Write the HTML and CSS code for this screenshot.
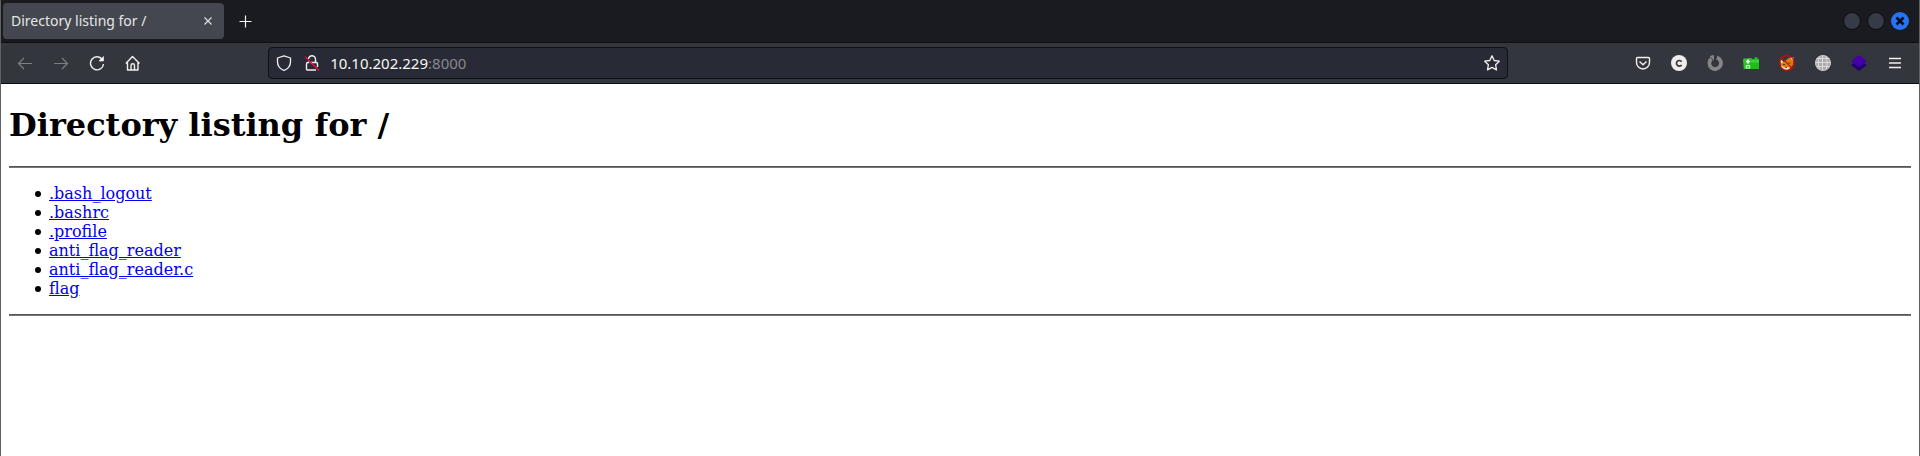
FILE: index.html
```html
<!DOCTYPE html>
<html lang="en">
<head>
<meta charset="utf-8">
<title>Directory listing for /</title>
<link rel="stylesheet" href="styles.css">
</head>
<body>
<div class="window">
  <header class="tabbar">
    <div class="tab">
      <span class="tab-title">Directory listing for /</span>
      <button class="tab-close" aria-label="Close tab"><svg width="16" height="16" viewBox="0 0 16 16"><path d="M4.500 4.500l7 7M11.500 4.500l-7 7" stroke="#e4e4e4" stroke-width="1.100"/></svg></button>
    </div>
    <button class="new-tab" aria-label="New tab"><svg width="16" height="16" viewBox="0 0 16 16"><path d="M8.500 2.500v12M2.500 8.500h12" stroke="#f4f4f4" stroke-width="1.200"/></svg></button>
    <div class="controls">
      <button class="control" aria-label="Minimize"></button>
      <button class="control" aria-label="Maximize"></button>
      <button class="control control-close" aria-label="Close"><svg width="18" height="18" viewBox="0 0 18 18"><path d="M5.500 5.500l7 7M12.500 5.500l-7 7" stroke="#090c14" stroke-width="2.600"/></svg></button>
    </div>
  </header>
  <nav class="toolbar">
    <button class="tool dim" aria-label="Back"><svg class="line" viewBox="0 0 16 16"><path d="M15 8.500H1.500M7 3L1.500 8.500L7 14"/></svg></button>
    <button class="tool dim" aria-label="Forward"><svg class="line" viewBox="0 0 16 16"><path d="M1 8.500h13.500M9 3l5.500 5.500L9 14"/></svg></button>
    <button class="tool" aria-label="Reload"><svg class="line" viewBox="0 0 16 16"><path d="M13.300 4.500A6.500 6.500 0 1 0 14.500 9" stroke-width="1.400"/><path d="M14.500 1.500v4.500h-4.500z" fill="#fbfbfe" stroke-width=".6"/></svg></button>
    <button class="tool" aria-label="Home"><svg class="line" viewBox="0 0 16 16"><path d="M.8 8.500L7.500 1.500l7 7M2.500 7.500v7.500h10.500v-7.500M6 15v-4.500a1.700 1.700 0 0 1 3.500 0v4.500" stroke-width="1.400" stroke-linejoin="round"/></svg></button>
    <div class="spring"></div>
    <div class="urlbar">
      <svg class="line" viewBox="0 0 16 16"><path d="M8 .8L14.500 3v3.500c0 4-2.500 7.500-6.500 9c-4-1.500-6.500-5-6.500-9V3z" stroke-width="1.300" stroke-linejoin="round"/></svg>
      <svg class="line lock" viewBox="0 0 16 16"><path d="M4.500 4a3.500 3.500 0 0 1 7 .5v3M6 7.500h6.500a1 1 0 0 1 1 1v3.500M12 15H3.500a1 1 0 0 1-1-1v-5a1.500 1.500 0 0 1 1.500-1.500h.500v-1" stroke-width="1.400"/><path d="M1 1.800l14 13.700" stroke="#e2123d" stroke-width="1.500"/></svg>
      <div class="url" role="textbox" aria-label="Address" tabindex="0">10.10.202.229<span class="port">:8000</span></div>
      <button class="bookmark" aria-label="Bookmark"><svg class="line" viewBox="0 0 16 16"><path d="M8 .8l2.200 4.700 5.100.7-3.700 3.500.9 5.200L8 12.400l-4.500 2.500.9-5.200L.7 6.200l5.100-.7z" stroke-width="1.300" stroke-linejoin="round"/></svg></button>
    </div>
    <div class="spring"></div>
    <button class="tool" aria-label="Pocket"><svg class="line" viewBox="0 0 16 16"><path d="M2.500 2.500h11a1 1 0 0 1 1 1v4a6.500 6.500 0 0 1-13 0v-4a1 1 0 0 1 1-1zM4.500 6.500L8 9.800l3.500-3.300" stroke-width="1.400" stroke-linejoin="round"/></svg></button>
    <button class="tool" aria-label="Cookies"><svg viewBox="0 0 16 16"><circle cx="8" cy="8" r="8" fill="#ededeb"/><path d="M10.600 6.700a2.800 2.800 0 1 0 0 3.200" fill="none" stroke="#373940" stroke-width="1.700"/></svg></button>
    <button class="tool" aria-label="Cycle"><svg viewBox="0 0 16 16"><path d="M9.800 2.600A5.800 5.800 0 1 1 4.500 3.700" fill="none" stroke="#858587" stroke-width="3.800"/><path d="M2.500 1L7 0v5.500z" fill="#858587"/></svg></button>
    <button class="tool" aria-label="Folder"><svg viewBox="0 0 16 16"><path d="M5 3h3.500l1 1H11l.7-1.700h2.600l.7 1.700h1v10H4z" fill="#24b924"/><path d="M0 4.500l1-1h5.500l1 1.500V14H.8z" fill="#2fc42c"/><path d="M7.500 5H16v2.500H7.500z" fill="#39d435"/><path d="M5 4.500v4M3 6.500h4" stroke="#fff" stroke-width="1.700"/><path d="M3.500 10.500h3v2.500h-3z" fill="none" stroke="#c8f5c5" stroke-width="1.200"/></svg></button>
    <button class="tool" aria-label="Fox"><svg viewBox="0 0 16 16"><path d="M1.500 6L5 7l4-3.500L13.500 2l1 3-.5 5-3.500 4-5 1-3.500-2.500z" fill="#dc7c0b"/><path d="M1 3.500l3.500 3.500-2.500 1.500zM11 2.500l3.500-.5v4zM2 10.500l3.500 2 3.500-.5 2 1.500-4 2-3.500-1.500z" fill="#eee3c7"/><path d="M4 9.500h2M9.500 8h2M6.500 12.500h1.500" stroke="#5a300c" stroke-width="1.100"/><circle cx="8" cy="8" r="7.400" fill="none" stroke="#c50c0c" stroke-width="1.200"/><path d="M2.700 2.700l10.600 10.600" stroke="#c50c0c" stroke-width="1.200"/></svg></button>
    <button class="tool" aria-label="Globe"><svg viewBox="0 0 16 16"><circle cx="8" cy="8" r="7.700" fill="#aaa"/><path d="M7.500 .5v15M.5 7.500h15M1.500 3.500h13M1.500 11.500h13M4.500 1c-1.500 4-1.500 10 0 14M11 1c1.500 4 1.500 10 0 14" stroke="#dcdcdc" fill="none"/><circle cx="8" cy="8" r="7.500" fill="none" stroke="#c7c7c7"/></svg></button>
    <button class="tool" aria-label="Layers"><svg viewBox="0 0 16 16"><path d="M0 10l8-5 8 5-8 6z" fill="#210070"/><path d="M0 6l8-6 8 6-8 6z" fill="#4600aa"/></svg></button>
    <button class="tool" aria-label="Menu"><svg class="line" viewBox="0 0 16 16"><path d="M2 3.500h12M2 8h12M2 12.500h12" stroke-width="1.300"/></svg></button>
  </nav>
  <main class="page">
    <h1 class="heading">Directory listing for /</h1>
    <hr class="rule">
    <ul class="files">
      <li><a href="#bash_logout">.bash_logout</a></li>
      <li><a href="#bashrc">.bashrc</a></li>
      <li><a href="#profile">.profile</a></li>
      <li><a href="#anti_flag_reader">anti_flag_reader</a></li>
      <li><a href="#anti_flag_reader_c">anti_flag_reader.c</a></li>
      <li><a href="#flag">flag</a></li>
    </ul>
    <hr class="rule">
  </main>
</div>
</body>
</html>
```
FILE: styles.css
```css
* { box-sizing: border-box; }
body { margin: 0; background: #fff; }
button { border: 0; padding: 0; background: none; display: flex; align-items: center; justify-content: center; }
svg { display: block; }
.window { min-height: 100vh; border: solid #616161; border-width: 0 1px; }
.tabbar { display: flex; align-items: center; height: 43px; padding: 0 10px 0 2px; background: #1a1b20; border-bottom: 1px solid #0e0f12; }
.tab { display: flex; align-items: center; justify-content: space-between; width: 221px; height: 36px; padding: 0 8px; border-radius: 4px; background: #44474f; }
.tab-title { font: 14px/20px "Noto Sans", sans-serif; color: #e6e6e4; }
.tab-close { width: 16px; height: 16px; }
.new-tab { width: 36px; height: 36px; margin-left: 3px; }
.controls { display: flex; gap: 6px; margin-left: auto; }
.control { width: 18px; height: 18px; border-radius: 50%; border: 1px solid #0b0c0f; background: #373b47; }
.control-close { border: 0; background: #2474f5; }
.toolbar { display: flex; align-items: center; height: 41px; padding: 0 6px; background: #34363e; border-bottom: 1px solid #0b0b12; }
.tool { flex: none; width: 36px; height: 36px; }
.tool svg { width: 16px; height: 16px; }
.dim { opacity: .4; }
.line { width: 16px; height: 16px; fill: none; stroke: #f0f0ee; stroke-width: 1.2; }
.spring { flex: 117 1 0; }
.urlbar { display: flex; align-items: center; flex: 1222 1 0; height: 32px; padding: 0 7px; border: 1px solid #0f1015; border-radius: 4px; background: #282a36; }
.lock { margin-left: 12px; }
.url { flex: 1; margin-left: 10px; font: 15px/20px "Noto Sans", sans-serif; color: #f8f8f2; }
.port { color: #87888d; }
.page { padding: 22px 8px 8px; font: 16px/19px "DejaVu Serif", serif; color: #000; }
.heading { margin: 0 0 22px; font-size: 32px; line-height: 38px; font-weight: bold; }
.rule { height: 2px; margin: 0; border: 0; border-top: 1px solid #555; background: #777; }
.files { margin: 16px 0; padding-left: 26px; list-style: none; }
.files li { display: flex; align-items: center; gap: 8px; }
.files li::before { content: ""; width: 6px; height: 6px; border-radius: 50%; background: #000; }
.files a { color: #0000ee; }
```
